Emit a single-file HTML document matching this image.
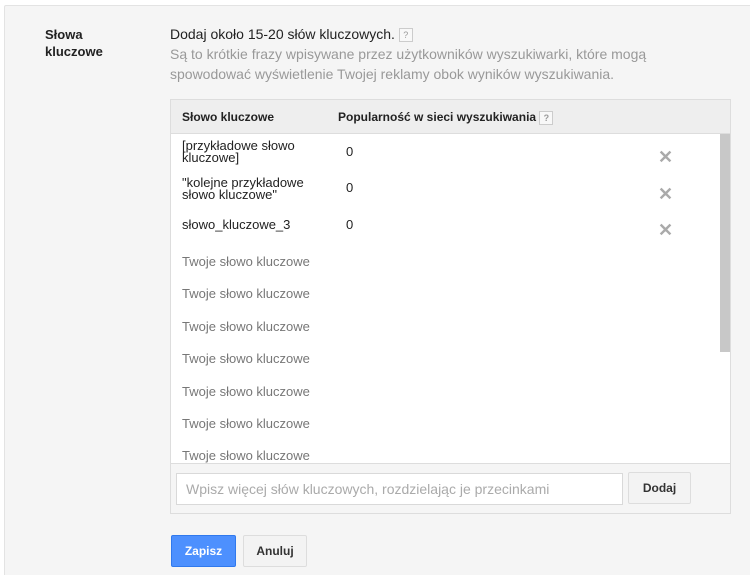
<!DOCTYPE html>
<html><head><meta charset="utf-8"><style>
html,body{margin:0;width:750px;height:575px;overflow:hidden}
body{background:#fff;font-family:"Liberation Sans",Arial,sans-serif;position:relative}
.panel{position:absolute;left:4px;top:5px;width:760px;height:590px;background:#f5f5f5;border:1px solid #e3e3e3;border-radius:2px}
.a{position:absolute;white-space:nowrap}
.q{display:inline-block;width:12px;height:12px;border:1px solid #ccc;background:#f8f8f8;color:#999;font-size:9px;line-height:12px;text-align:center;vertical-align:middle}
.kw{font-size:13px;color:#222;line-height:12px}
.ph{font-size:13px;color:#777}
.x{position:absolute;left:658px;color:#aaa;font-size:18px;line-height:14px;font-weight:bold}
</style></head><body>
<div class="panel"></div>
<div class="a" style="left:45px;top:26px;font-size:13px;font-weight:bold;color:#222;line-height:17px">Słowa<br>kluczowe</div>
<div class="a" style="left:170px;top:26px;font-size:14px;color:#222">Dodaj około 15-20 słów kluczowych. <span class="q">?</span></div>
<div class="a" style="left:170px;top:44px;font-size:14px;color:#999;line-height:20px">Są to krótkie frazy wpisywane przez użytkowników wyszukiwarki, które mogą<br>spowodować wyświetlenie Twojej reklamy obok wyników wyszukiwania.</div>
<div class="a" style="left:170px;top:99px;width:559px;height:413px;border:1px solid #ddd;background:#f5f5f5"></div>
<div class="a" style="left:171px;top:100px;width:559px;height:33px;background:#eee;border-bottom:1px solid #ddd"></div>
<div class="a" style="left:171px;top:134px;width:559px;height:329px;background:#fff;border-bottom:1px solid #ddd"></div>
<div class="a" style="left:720px;top:134px;width:10px;height:218px;background:#c8c8c8"></div>
<div class="a" style="left:182px;top:110px;font-size:12px;font-weight:bold;color:#222">Słowo kluczowe</div>
<div class="a" style="left:338px;top:110px;font-size:12px;font-weight:bold;color:#222">Popularność w sieci wyszukiwania <span class="q">?</span></div>
<div class="a kw" style="left:182px;top:140px">[przykładowe słowo<br>kluczowe]</div>
<div class="a kw" style="left:346px;top:146px">0</div>
<div class="x" style="top:150px">✕</div>
<div class="a kw" style="left:182px;top:177px">"kolejne przykładowe<br>słowo kluczowe"</div>
<div class="a kw" style="left:346px;top:182px">0</div>
<div class="x" style="top:187px">✕</div>
<div class="a kw" style="left:182px;top:219px">słowo_kluczowe_3</div>
<div class="a kw" style="left:346px;top:219px">0</div>
<div class="x" style="top:223px">✕</div>
<div class="a ph" style="left:182px;top:254px">Twoje słowo kluczowe</div>
<div class="a ph" style="left:182px;top:286px">Twoje słowo kluczowe</div>
<div class="a ph" style="left:182px;top:319px">Twoje słowo kluczowe</div>
<div class="a ph" style="left:182px;top:351px">Twoje słowo kluczowe</div>
<div class="a ph" style="left:182px;top:384px">Twoje słowo kluczowe</div>
<div class="a ph" style="left:182px;top:416px">Twoje słowo kluczowe</div>
<div class="a ph" style="left:182px;top:448px">Twoje słowo kluczowe</div>
<div class="a" style="left:176px;top:473px;width:445px;height:30px;background:#fff;border:1px solid #d9d9d9"></div>
<div class="a" style="left:186px;top:481px;font-size:14px;color:#aaa">Wpisz więcej słów kluczowych, rozdzielając je przecinkami</div>
<div class="a" style="left:628px;top:472px;width:61px;height:30px;background:#f3f3f3;border:1px solid #ddd;border-radius:2px;font-size:12px;font-weight:bold;color:#333;text-align:center;line-height:30px">Dodaj</div>
<div class="a" style="left:171px;top:535px;width:63px;height:30px;background:#4d90fe;border:1px solid #3079ed;border-radius:2px;font-size:12px;font-weight:bold;color:#fff;text-align:center;line-height:30px">Zapisz</div>
<div class="a" style="left:243px;top:535px;width:62px;height:30px;background:#f3f3f3;border:1px solid #ddd;border-radius:2px;font-size:12px;font-weight:bold;color:#333;text-align:center;line-height:30px">Anuluj</div>
</body></html>
